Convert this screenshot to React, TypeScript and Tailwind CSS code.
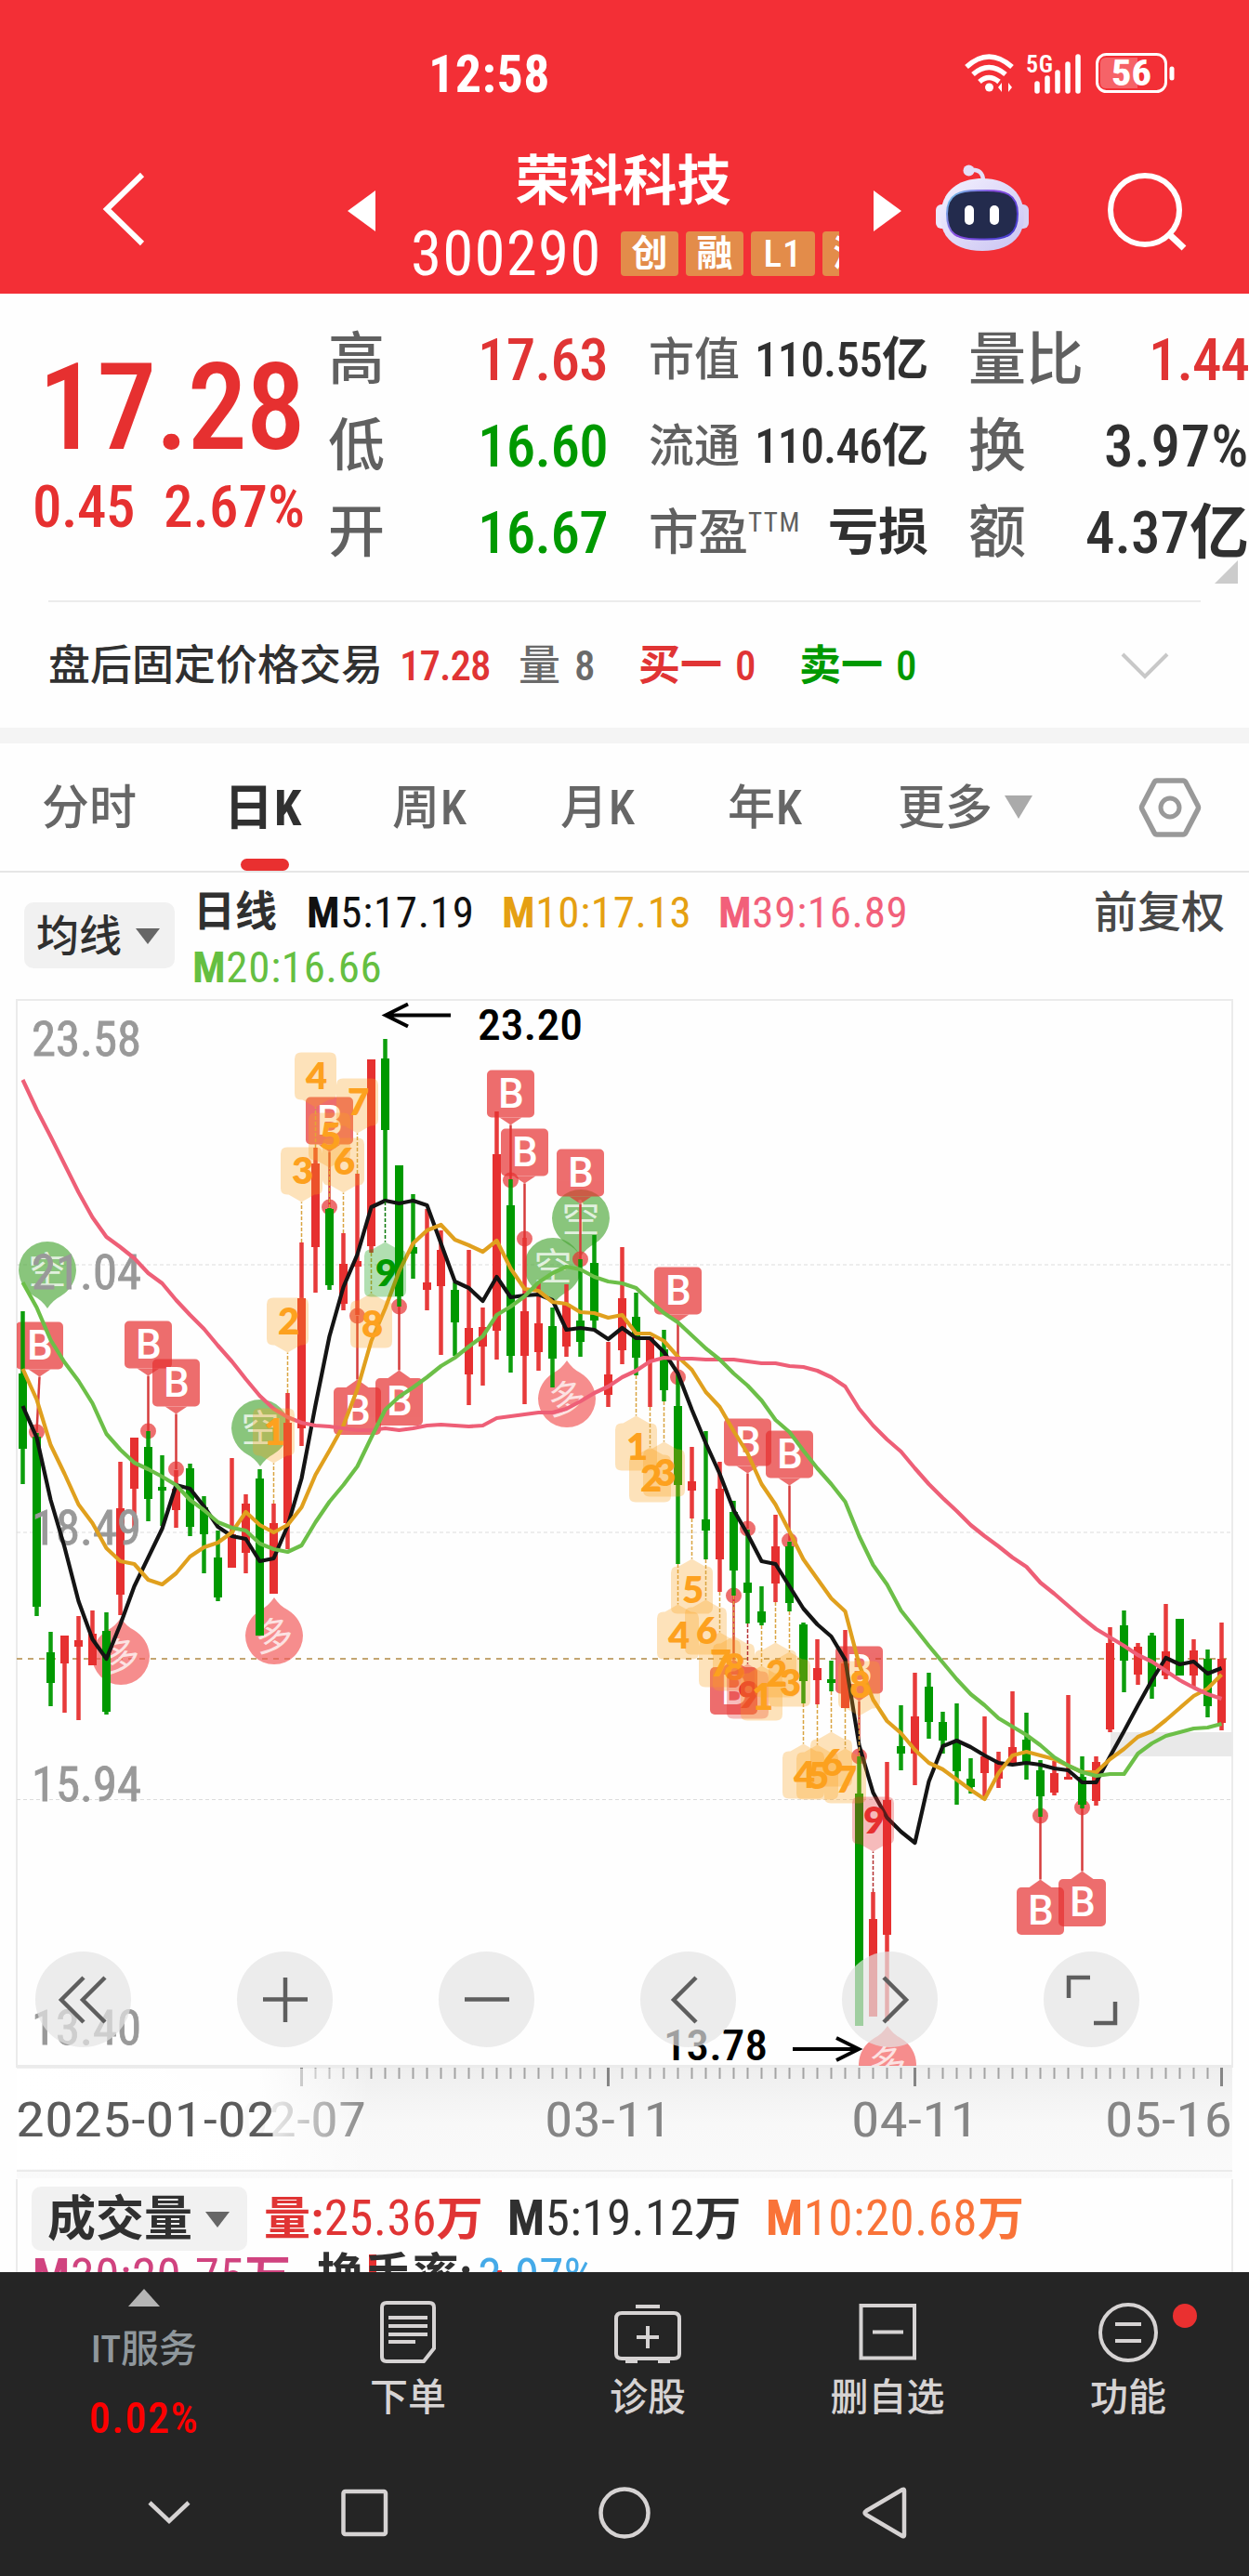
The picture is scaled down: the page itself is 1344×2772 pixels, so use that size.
import type { ReactNode } from "react";

const RED = "#e63030";
const GREEN = "#009900";

// [color, high, body top, body bottom, low], all in chart pixels
type Candle = ["r" | "g", number, number, number, number];

const candles: Candle[] = [
  ["g", 1411, 1478, 1559, 1597],
  ["g", 1542, 1546, 1729, 1739],
  ["g", 1756, 1778, 1811, 1836],
  ["r", 1760, 1760, 1790, 1843],
  ["r", 1739, 1765, 1772, 1851],
  ["r", 1733, 1758, 1792, 1792],
  ["g", 1735, 1755, 1842, 1845],
  ["r", 1573, 1623, 1716, 1738],
  ["r", 1547, 1547, 1602, 1644],
  ["g", 1540, 1557, 1613, 1637],
  ["g", 1566, 1600, 1604, 1642],
  ["r", 1582, 1602, 1625, 1644],
  ["g", 1575, 1580, 1643, 1653],
  ["g", 1610, 1622, 1651, 1693],
  ["g", 1647, 1676, 1719, 1723],
  ["r", 1569, 1651, 1687, 1687],
  ["r", 1608, 1618, 1671, 1693],
  ["g", 1581, 1591, 1760, 1760],
  ["r", 1618, 1639, 1715, 1715],
  ["r", 1499, 1531, 1639, 1667],
  ["r", 1337, 1397, 1537, 1556],
  ["r", 1235, 1252, 1342, 1391],
  ["g", 1300, 1301, 1383, 1388],
  ["r", 1327, 1360, 1403, 1410],
  ["r", 1263, 1357, 1363, 1415],
  ["r", 1140, 1140, 1341, 1348],
  ["g", 1118, 1139, 1216, 1293],
  ["g", 1254, 1254, 1395, 1406],
  ["g", 1285, 1342, 1349, 1376],
  ["r", 1301, 1380, 1388, 1410],
  ["r", 1324, 1345, 1384, 1458],
  ["g", 1380, 1388, 1423, 1459],
  ["r", 1345, 1429, 1479, 1512],
  ["r", 1407, 1428, 1449, 1491],
  ["r", 1196, 1242, 1432, 1463],
  ["g", 1269, 1297, 1459, 1477],
  ["r", 1332, 1411, 1459, 1511],
  ["r", 1381, 1424, 1455, 1475],
  ["g", 1407, 1427, 1462, 1493],
  ["r", 1382, 1403, 1449, 1460],
  ["g", 1355, 1421, 1444, 1460],
  ["g", 1329, 1359, 1421, 1430],
  ["r", 1444, 1479, 1501, 1514],
  ["r", 1342, 1397, 1453, 1468],
  ["g", 1391, 1417, 1461, 1480],
  ["r", 1439, 1439, 1466, 1514],
  ["g", 1431, 1452, 1496, 1508],
  ["g", 1479, 1513, 1598, 1683],
  ["r", 1557, 1594, 1604, 1634],
  ["g", 1540, 1635, 1647, 1678],
  ["r", 1573, 1602, 1678, 1713],
  ["g", 1615, 1627, 1690, 1717],
  ["g", 1646, 1703, 1714, 1747],
  ["g", 1707, 1734, 1746, 1749],
  ["r", 1630, 1664, 1704, 1724],
  ["g", 1659, 1664, 1725, 1734],
  ["g", 1746, 1748, 1809, 1833],
  ["r", 1764, 1795, 1808, 1834],
  ["g", 1787, 1807, 1811, 1820],
  ["r", 1754, 1790, 1838, 1838],
  ["g", 1890, 1930, 2180, 2180],
  ["r", 2036, 2065, 2170, 2170],
  ["r", 1896, 1937, 2082, 2175],
  ["g", 1835, 1879, 1887, 1905],
  ["r", 1800, 1847, 1887, 1921],
  ["g", 1800, 1815, 1853, 1871],
  ["g", 1842, 1853, 1873, 1887],
  ["g", 1833, 1873, 1906, 1942],
  ["g", 1892, 1914, 1923, 1930],
  ["r", 1847, 1890, 1908, 1935],
  ["r", 1885, 1897, 1914, 1924],
  ["r", 1820, 1880, 1899, 1899],
  ["g", 1843, 1872, 1897, 1915],
  ["g", 1894, 1905, 1933, 1955],
  ["r", 1895, 1908, 1929, 1932],
  ["r", 1824, 1912, 1915, 1915],
  ["g", 1890, 1912, 1942, 1946],
  ["r", 1890, 1896, 1938, 1943],
  ["r", 1751, 1768, 1861, 1864],
  ["g", 1733, 1749, 1787, 1821],
  ["r", 1768, 1772, 1802, 1813],
  ["g", 1757, 1760, 1815, 1828],
  ["r", 1726, 1777, 1803, 1807],
  ["g", 1742, 1742, 1803, 1803],
  ["r", 1764, 1776, 1803, 1817],
  ["g", 1775, 1785, 1836, 1848],
  ["r", 1746, 1785, 1854, 1862],
];

const ma5 = [
  1513, 1547, 1614, 1665, 1723, 1764, 1785, 1748, 1707, 1676, 1645, 1598, 1602, 1621, 1643, 1653, 1656, 1680, 1677,
  1642, 1591, 1512, 1438, 1385, 1350, 1299, 1292, 1295, 1292, 1297, 1338, 1379, 1386, 1400, 1374, 1396, 1394, 1393,
  1399, 1431, 1429, 1431, 1441, 1429, 1440, 1440, 1455, 1478, 1517, 1553, 1586, 1625, 1651, 1680, 1683, 1707, 1731,
  1748, 1761, 1786, 1878, 1929, 1956, 1971, 1983, 1917, 1879, 1873, 1880, 1889, 1897, 1899, 1897, 1899, 1903, 1905,
  1918, 1918, 1890, 1863, 1835, 1808, 1784, 1791, 1788, 1801, 1795,
];

const ma10 = [
  1473, 1506, 1555, 1586, 1619, 1639, 1666, 1680, 1683, 1700, 1705, 1693, 1675, 1665, 1660, 1649, 1627, 1641, 1649,
  1641, 1622, 1587, 1561, 1534, 1495, 1443, 1408, 1368, 1338, 1324, 1318, 1334, 1340, 1347, 1335, 1365, 1387, 1389,
  1401, 1403, 1412, 1413, 1418, 1415, 1435, 1435, 1443, 1460, 1474, 1498, 1514, 1540, 1564, 1597, 1619, 1648, 1678,
  1699, 1720, 1734, 1791, 1829, 1852, 1865, 1883, 1897, 1904, 1915, 1926, 1936, 1908, 1889, 1885, 1889, 1893, 1900,
  1907, 1907, 1893, 1882, 1869, 1863, 1851, 1838, 1825, 1817, 1802,
];

const ma20 = [
  1380, 1407, 1442, 1466, 1486, 1510, 1543, 1560, 1574, 1581, 1589, 1598, 1614, 1625, 1638, 1644, 1647, 1661, 1667,
  1670, 1663, 1638, 1616, 1598, 1578, 1547, 1517, 1503, 1493, 1482, 1470, 1461, 1449, 1438, 1415, 1406, 1395, 1380,
  1370, 1363, 1366, 1374, 1379, 1381, 1386, 1400, 1413, 1423, 1437, 1451, 1463, 1478, 1491, 1507, 1528, 1541, 1561,
  1580, 1597, 1616, 1653, 1684, 1705, 1733, 1752, 1771, 1789, 1807, 1823, 1835, 1849, 1858, 1867, 1878, 1891, 1900,
  1907, 1911, 1909, 1909, 1887, 1876, 1868, 1864, 1860, 1859, 1855,
];

const ma39 = [
  1162, 1194, 1223, 1253, 1283, 1310, 1331, 1342, 1354, 1370, 1381, 1399, 1415, 1430, 1448, 1465, 1484, 1502, 1516,
  1525, 1531, 1534, 1535, 1537, 1539, 1539, 1537, 1539, 1537, 1534, 1533, 1534, 1535, 1534, 1526, 1524, 1522, 1520,
  1520, 1516, 1508, 1499, 1492, 1482, 1475, 1465, 1461, 1462, 1462, 1463, 1463, 1463, 1465, 1467, 1467, 1470, 1471,
  1475, 1482, 1492, 1516, 1534, 1549, 1562, 1580, 1597, 1612, 1626, 1641, 1653, 1664, 1676, 1686, 1703, 1715, 1728,
  1741, 1753, 1762, 1771, 1781, 1788, 1798, 1808, 1816, 1823, 1828,
];

const xOf = (i: number) => 24.5 + i * 15;
const toPath = (line: number[]) => "M" + line.map((y, i) => `${xOf(i)} ${y}`).join("L");

// [candle index, dot y, pin sits below the candle]
const buys: [number, number, boolean][] = [
  [1, 1541, false],
  [9, 1540, false],
  [11, 1581, false],
  [22, 1299, false],
  [24, 1416, true],
  [27, 1406, true],
  [35, 1270, false],
  [36, 1333, false],
  [40, 1355, false],
  [47, 1482, false],
  [51, 1717, true],
  [52, 1645, false],
  [55, 1658, false],
  [60, 1890, false],
  [73, 1954, true],
  [76, 1945, true],
];

// [candle index, digit, sits below the candle, color]
const counts: [number, string, boolean, "o" | "g" | "r"][] = [
  [18, "1", false, "o"],
  [19, "2", false, "o"],
  [20, "3", false, "o"],
  [21, "4", false, "o"],
  [22, "5", false, "o"],
  [23, "6", false, "o"],
  [24, "7", false, "o"],
  [25, "8", true, "o"],
  [26, "9", true, "g"],
  [44, "1", true, "o"],
  [45, "2", true, "o"],
  [46, "3", true, "o"],
  [47, "4", true, "o"],
  [48, "5", true, "o"],
  [49, "6", true, "o"],
  [50, "7", true, "o"],
  [51, "8", true, "o"],
  [52, "9", true, "r"],
  [53, "1", true, "o"],
  [54, "2", true, "o"],
  [55, "3", true, "o"],
  [56, "4", true, "o"],
  [57, "5", true, "o"],
  [58, "6", true, "o"],
  [59, "7", true, "o"],
  [60, "8", false, "o"],
  [61, "9", false, "r"],
];

const countColor = {
  o: { fill: "#fda11f", line: "#d9a441", opacity: 0.3 },
  g: { fill: "#009900", line: "#0a7a0a", opacity: 0.3 },
  r: { fill: "#e63030", line: "#b53030", opacity: 0.32 },
};

// [center x, center y, bullish]
const bubbles: [number, number, boolean][] = [
  [51, 1367, false],
  [280, 1537, false],
  [595, 1363, false],
  [625, 1311, false],
  [130, 1782, true],
  [295, 1760, true],
  [610, 1505, true],
  [955, 2221, true],
];

function Bubble({ x, y, bull }: { x: number; y: number; bull: boolean }) {
  const d = bull ? -1 : 1;
  return (
    <g>
      <path
        d={`M${x - 31} ${y}A31 31 0 1 ${bull ? 0 : 1} ${x + 31} ${y}Q${x + 30} ${y + d * 18} ${x + 14} ${y + d * 28}Q${x + 6} ${y + d * 32} ${x} ${y + d * 41}Q${x - 6} ${y + d * 32} ${x - 14} ${y + d * 28}Q${x - 30} ${y + d * 18} ${x - 31} ${y}Z`}
        fill={bull ? "#f25c5c" : "#4aa636"}
        opacity={bull ? 0.7 : 0.65}
      />
      <text
        x={x}
        y={y + 15}
        fontSize={41}
        textAnchor="middle"
        fill="#fff"
        opacity={0.75}
        transform={`rotate(${bull ? -8 : 0} ${x} ${y})`}
      >
        {bull ? "多" : "空"}
      </text>
    </g>
  );
}

function BuyPin({ i, dot, below }: { i: number; dot: number; below: boolean }) {
  const cx = xOf(i);
  const x = i === 1 ? 42.5 : cx;
  const top = below ? dot + 77 : dot - 118.5;
  const tip = below ? dot + 68.5 : dot - 59.5;
  const base = below ? top : top + 51;
  return (
    <g>
      <line x1={x} y1={tip} x2={cx} y2={dot} stroke="#d63c3c" strokeWidth={2.5} />
      <circle cx={cx} cy={dot} r={8.5} fill={RED} opacity={0.7} />
      <g fill={RED} opacity={0.7}>
        <rect x={x - 25.5} y={top} width={51} height={51} rx={5} />
        <path d={`M${x - 12} ${base}L${x} ${tip}L${x + 12} ${base}Z`} />
      </g>
      <text
        x={x + 0.5}
        y={top + 40}
        fontSize={44}
        fontWeight={500}
        textAnchor="middle"
        fill="#fff"
        className="font-stretch-normal"
      >
        B
      </text>
    </g>
  );
}

function CountPin({ i, digit, below, color }: { i: number; digit: string; below: boolean; color: "o" | "g" | "r" }) {
  const x = xOf(i);
  const c = countColor[color];
  const edge = below ? candles[i][4] : candles[i][1];
  const top = below ? edge + 51.5 : edge - 102.5;
  const tip = below ? edge + 43.5 : edge - 43.5;
  const base = below ? top : top + 51;
  return (
    <g>
      <line x1={x} y1={edge} x2={x} y2={tip} stroke={c.line} strokeWidth={1.5} strokeDasharray="4 2" />
      <path
        d={`M${x - 15.5} ${top}H${x + 15.5}q7 0 7 7v37q0 7 -7 7H${x - 15.5}q-7 0 -7 -7v-37q0 -7 7 -7Z M${x - 14} ${base}L${x} ${tip}L${x + 14} ${base}Z`}
        fill={c.fill}
        opacity={c.opacity}
      />
      <text
        x={x + 1}
        y={top + 39}
        fontSize={40}
        fontWeight={800}
        textAnchor="middle"
        fill={c.fill}
        className="font-['Lato',sans-serif]"
      >
        {digit}
      </text>
    </g>
  );
}

const priceLabels: [string, number][] = [
  ["23.58", 1136],
  ["21.04", 1387],
  ["18.49", 1662],
  ["15.94", 1938],
  ["13.40", 2200],
];

const dateLabels: [string, number][] = [
  ["03-11", 586],
  ["04-11", 916],
  ["05-16", 1189],
];

function KLineChart() {
  return (
    <svg width="1344" height="1270" viewBox="0 1075 1344 1270" className="block">
      <defs>
        <linearGradient id="axis" x1="0" y1="0" x2="0" y2="1">
          <stop offset="0" stopColor="#eeeeee" />
          <stop offset="0.5" stopColor="#f8f8f8" />
          <stop offset="1" stopColor="#fafafa" />
        </linearGradient>
        <linearGradient id="fade" x1="0" y1="0" x2="1" y2="0">
          <stop offset="0" stopColor="#fff" />
          <stop offset="0.68" stopColor="#fff" stopOpacity="0.95" />
          <stop offset="1" stopColor="#fff" stopOpacity="0" />
        </linearGradient>
        <clipPath id="plot">
          <rect x="18" y="1075" width="1308" height="1148" />
        </clipPath>
      </defs>

      <rect x="18" y="2225" width="1308" height="119" fill="url(#axis)" />
      <g stroke="#ebebeb" strokeWidth="2">
        <path d="M18 1075V2223M1326 1075V2223" />
        <path d="M17 1075.5H1327M17 2223.5H1327" strokeWidth="3" />
        <path d="M18 2336H1326" strokeWidth="2" />
      </g>
      <path d="M18 1361H1326M18 1649H1326M18 1936.5H1326" stroke="#dcdcdc" strokeWidth="1" strokeDasharray="4 3" />
      <path d="M18 1785H1326" stroke="#c3a571" strokeWidth="2" strokeDasharray="6 6" />
      <rect x="1195" y="1864" width="131" height="26" fill="#e9e9e9" />

      <g clipPath="url(#plot)">
        {bubbles.map(([x, y, bull]) => (
          <Bubble key={x} x={x} y={y} bull={bull} />
        ))}
        {buys.map(([i, dot, below]) => (
          <BuyPin key={i} i={i} dot={dot} below={below} />
        ))}
        {candles.map(([color, high, top, bottom, low], i) => (
          <g key={i} fill={color === "r" ? RED : GREEN}>
            <rect x={xOf(i) - 2.25} y={high} width={4.5} height={low - high} opacity={0.95} />
            <rect x={xOf(i) - 4.5} y={top} width={9} height={bottom - top} />
          </g>
        ))}
        <g fontSize="52" fill="#999" strokeWidth="0.8" stroke="#999">
          {priceLabels.map(([label, y]) => (
            <text key={label} x="34" y={y} textLength="118" lengthAdjust="spacingAndGlyphs">
              {label}
            </text>
          ))}
        </g>
        <g fill="none" strokeWidth="4.2" strokeLinejoin="round">
          <path d={toPath(ma5)} stroke="#141414" />
          <path d={toPath(ma10)} stroke="#e0a01e" />
          <path d={toPath(ma39)} stroke="#ee5f77" />
          <path d={toPath(ma20)} stroke="#6cbf48" />
        </g>
        {counts.map(([i, digit, below, color]) => (
          <CountPin key={i} i={i} digit={digit} below={below} color={color} />
        ))}
        <g fontSize="46" fontWeight="500">
          <text x="514" y="1119" textLength="113" lengthAdjust="spacingAndGlyphs">
            23.20
          </text>
          <text x="714" y="2217" textLength="112" lengthAdjust="spacingAndGlyphs">
            13.78
          </text>
        </g>
        <g fill="none" stroke="#000" strokeWidth="4">
          <path d="M485 1092.5H415M439 1080.500L415 1092.500L439 1104.500" />
          <path d="M853 2205H924M900 2193L924 2205L900 2217" />
        </g>
      </g>

      <g stroke="#a3a3a3" strokeWidth="2">
        {candles.map((_, i) => i > 19 && <line key={i} x1={xOf(i)} x2={xOf(i)} y1="2225" y2="2237" />)}
      </g>
      <path d="M324.500 2225V2245M654.500 2225V2245M984.500 2225V2245M1314.500 2225V2245" stroke="#858585" strokeWidth="3" />
      <g fontSize="51" fill="#858585">
        <text x="259" y="2299" textLength="135" lengthAdjust="spacingAndGlyphs">
          02-07
        </text>
        {dateLabels.map(([label, x]) => (
          <text key={label} x={x} y="2299" textLength="137" lengthAdjust="spacingAndGlyphs">
            {label}
          </text>
        ))}
      </g>
      <rect x="18" y="2226" width="380" height="108" fill="url(#fade)" />
      <text x="17" y="2299" fontSize="51" fill="#5c5c5c" textLength="279" lengthAdjust="spacingAndGlyphs">
        2025-01-02
      </text>
    </svg>
  );
}

function RoundButton({ children }: { children: ReactNode }) {
  return (
    <button className="size-[103px] rounded-full bg-[#e4e4e4]/70">
      <svg
        width="103"
        height="103"
        viewBox="0 0 103 103"
        fill="none"
        stroke="#5e5e5e"
        strokeWidth="4.500"
      >
        {children}
      </svg>
    </button>
  );
}

function ChartButtons() {
  return (
    <div className="absolute left-[38px] top-[1025px] flex gap-[114px]">
      <RoundButton>
        <path d="M52 28L28 52L52 76M75 28L51 52L75 76" />
      </RoundButton>
      <RoundButton>
        <path d="M28 51.500H76M52 28V76" />
      </RoundButton>
      <RoundButton>
        <path d="M28 51.500H76" />
      </RoundButton>
      <RoundButton>
        <path d="M60 28L36 52L60 76" />
      </RoundButton>
      <RoundButton>
        <path d="M45 28L69 52L45 76" />
      </RoundButton>
      <RoundButton>
        <path d="M27 50V28H50M77 54V77H54" />
      </RoundButton>
    </div>
  );
}

function StatusIcons() {
  return (
    <svg width="230" height="46" viewBox="1036 56 230 46" className="ml-[446px]">
      <g fill="none" stroke="#fff" strokeWidth="5.500">
        <path d="M1040 72Q1064 50 1089 72" />
        <path d="M1047 80Q1064 65 1082 80" />
        <path d="M1054 88Q1064 79 1075 88" />
      </g>
      <circle cx="1064.500" cy="94" r="4.500" fill="#fff" />
      <path d="M1074 94l4-5v10zM1089 94l-4-5v10z" fill="#fff" />
      <text x="1104" y="78" fontSize="26" fontWeight="600" fill="#fff" textLength="29">
        5G
      </text>
      <path d="M1116 98V90M1127 98V84M1138 98V78M1149 98V69M1160 98V61" stroke="#fff" strokeWidth="5.500" strokeLinecap="round" />
      <rect x="1180.500" y="58.500" width="74" height="40" rx="10" fill="none" stroke="#fff" strokeWidth="3" />
      <path d="M1190 62H1224V95H1190Q1184 95 1184 89V68Q1184 62 1190 62Z" fill="#fff" opacity="0.25" />
      <text x="1196" y="92" fontSize="39" fontWeight="800" fill="#fff" textLength="43" lengthAdjust="spacingAndGlyphs">
        56
      </text>
      <path d="M1261 74V84" stroke="#fff" strokeWidth="5" strokeLinecap="round" />
    </svg>
  );
}

function Robot() {
  return (
    <svg width="102" height="96" viewBox="0 0 102 96">
      <defs>
        <linearGradient id="shell" x1="0" y1="0" x2="1" y2="1">
          <stop offset="0" stopColor="#f4f1ff" />
          <stop offset="1" stopColor="#c9c3f2" />
        </linearGradient>
        <linearGradient id="rim" x1="0" y1="0" x2="1" y2="0.6">
          <stop offset="0" stopColor="#6fd0e8" />
          <stop offset="0.5" stopColor="#8a4be0" />
          <stop offset="1" stopColor="#4a3fd0" />
        </linearGradient>
      </defs>
      <path d="M37 6Q52 4 52 18" fill="none" stroke="#e4def8" strokeWidth="4.500" />
      <circle cx="36.500" cy="6.500" r="6" fill="#e4def8" />
      <rect x="1" y="43" width="14" height="26" rx="6" fill="#ece7fb" />
      <rect x="87" y="43" width="14" height="26" rx="6" fill="#d8d2f3" />
      <path d="M51 15C80 15 96 32 96 56C96 80 78 93 51 93C24 93 6 80 6 56C6 32 22 15 51 15Z" fill="url(#shell)" />
      <path d="M51 28C76 27 89 32 89 53C89 75 80 81 51 80.500C22 81 13 75 13 53C13 32 26 27 51 28Z" fill="#232b4d" stroke="url(#rim)" strokeWidth="2" />
      <rect x="32" y="44" width="10" height="21" rx="5" fill="#fff" />
      <rect x="59" y="44" width="10" height="21" rx="5" fill="#fff" />
    </svg>
  );
}

function Header() {
  return (
    <header className="h-[316px] bg-[#f32f36] text-white">
      <div className="flex h-[158px] items-center pl-[461px]">
        <span className="w-[129px] whitespace-nowrap pt-[2px] text-[56px] font-bold leading-none tracking-[0.5px]">12:58</span>
        <StatusIcons />
      </div>
      <div className="flex h-[158px] items-start">
        <svg width="50" height="80" viewBox="0 0 50 80" className="ml-[107px] mt-[27px]">
          <path d="M46 3L8 40L46 77" fill="none" stroke="#fff" strokeWidth="6" />
        </svg>
        <svg width="30" height="44" viewBox="0 0 30 44" className="ml-[217px] mt-[47px]">
          <path d="M30 0V44L0 22Z" fill="#fff" />
        </svg>
        <div className="ml-[38px] w-[461px] overflow-hidden">
          <h1 className="mt-1 pr-[4px] text-center text-[58px] font-bold leading-[66px]">荣科科技</h1>
          <div className="mt-[20px] flex items-center whitespace-nowrap text-[39px] font-bold">
            <span className="w-[226px] shrink-0 text-[67px] font-normal leading-[50px] tracking-[1.2px]">300290</span>
            <div className="flex gap-2 leading-[48px]">
              <span className="w-[62px] shrink-0 rounded-[4px] bg-[#e38c4a] text-center">创</span>
              <span className="w-[62px] shrink-0 rounded-[4px] bg-[#e38c4a] text-center">融</span>
              <span className="w-[69px] shrink-0 rounded-[4px] bg-[#e38c4a] text-center text-[41px] font-medium tracking-[1px]">L1</span>
              <span className="w-[62px] shrink-0 rounded-[4px] bg-[#e38c4a] text-center">深</span>
            </div>
          </div>
        </div>
        <svg width="30" height="44" viewBox="0 0 30 44" className="ml-[37px] mt-[47px]">
          <path d="M0 0V44L30 22Z" fill="#fff" />
        </svg>
        <div className="ml-[36px] mt-[19px]">
          <Robot />
        </div>
        <svg width="86" height="86" viewBox="0 0 86 86" className="ml-[84px] mt-[26px]">
          <g fill="none" stroke="#fff" strokeWidth="6">
            <circle cx="40" cy="42" r="37" />
            <path d="M66 68L82 83" strokeWidth="7" />
          </g>
        </svg>
      </div>
    </header>
  );
}

const highLow = [
  ["高", "17.63", "text-[#e03434]"],
  ["低", "16.60", "text-[#009900]"],
  ["开", "16.67", "text-[#009900]"],
];

function Quote() {
  return (
    <section className="relative flex h-[330px] pt-[25px] font-medium">
      <div className="w-[353px] text-[#e63030]">
        <div className="mt-[34px] pl-[41px] text-[129px] leading-[128px] tracking-[-1.5px]">17.28</div>
        <div className="mt-[6px] flex whitespace-nowrap pl-[35px] text-[63px] leading-[74px] tracking-[-0.5px]">
          <span className="w-[141px]">0.45</span>
          <span className="tracking-normal">2.67%</span>
        </div>
      </div>
      <div className="w-[301px] leading-[93px]">
        {highLow.map(([label, value, color]) => (
          <div key={label} className="flex justify-between">
            <span className="text-[61px] text-[#606060]">{label}</span>
            <span className={`text-[63px] tracking-[-0.7px] ${color}`}>{value}</span>
          </div>
        ))}
      </div>
      <div className="ml-[44px] w-[301px] leading-[93px] text-[#303030]">
        <div className="flex items-center">
          <span className="w-[114px] text-[49px] text-[#606060]">市值</span>
          <span className="flex-1 text-[51px] tracking-[-0.8px]">110.55</span>
          <span className="text-[50px] font-bold">亿</span>
        </div>
        <div className="flex items-center">
          <span className="w-[114px] text-[49px] text-[#606060]">流通</span>
          <span className="flex-1 text-[51px] tracking-[-0.8px]">110.46</span>
          <span className="text-[50px] font-bold">亿</span>
        </div>
        <div className="flex items-center">
          <span className="text-[53.5px] text-[#606060]">市盈</span>
          <span className="flex-1 pb-[22px] text-[29px] leading-none font-normal tracking-[1.5px] text-[#606060]">TTM</span>
          <span className="text-[54px] font-bold">亏损</span>
        </div>
      </div>
      <div className="ml-[43px] w-[302px] leading-[93px] text-[#303030]">
        <div className="flex justify-between">
          <span className="text-[62px] text-[#606060]">量比</span>
          <span className="text-[63px] tracking-[-1px] text-[#e03434]">1.44</span>
        </div>
        <div className="flex justify-between">
          <span className="text-[62px] text-[#606060]">换</span>
          <span className="text-[63px] tracking-[0.8px]">3.97%</span>
        </div>
        <div className="flex">
          <span className="flex-1 text-[62px] text-[#606060]">额</span>
          <span className="text-[63px]">4.37</span>
          <span className="text-[64px] font-bold">亿</span>
        </div>
      </div>
      <svg width="25" height="25" viewBox="0 0 25 25" className="absolute left-[1307px] top-[287px]">
        <path d="M25 0V25H0Z" fill="#ccc" />
      </svg>
    </section>
  );
}

function AfterHours() {
  return (
    <section className="mx-[52px] flex h-[137px] items-center border-t-2 border-[#ececec] pt-[3px] whitespace-nowrap text-[45px] font-medium">
      <span className="w-[378px] text-[#303030]">盘后固定价格交易</span>
      <span className="w-[128px] text-[45px] tracking-[-1px] text-[#e03434]">17.28</span>
      <span className="w-[60px] text-[#6a6a6a]">量</span>
      <span className="w-[69px] text-[45px] text-[#6a6a6a]">8</span>
      <span className="w-[104px] font-bold text-[#e03434]">买一</span>
      <span className="w-[69px] text-[45px] text-[#e03434]">0</span>
      <span className="w-[104px] font-bold text-[#009900]">卖一</span>
      <span className="w-[242px] text-[45px] text-[#009900]">0</span>
      <svg width="52" height="32" viewBox="0 0 52 32">
        <path d="M2 3L26 27L50 3" fill="none" stroke="#c8c8c8" strokeWidth="4" />
      </svg>
    </section>
  );
}

function Tabs() {
  return (
    <nav className="flex h-[139px] items-center border-b-2 border-[#e6e6e6] pl-[45px] text-[51px] font-medium text-[#666]">
      <span className="w-[196px] pt-[3px]">分时</span>
      <span className="flex h-full w-[181px] flex-col">
        <span className="flex h-[125px] items-center pt-[17px] text-[53px] font-bold tracking-[1px] text-[#303030]">日K</span>
        <span className="ml-[18px] h-[13px] w-[52px] rounded-full bg-[#e93030]" />
      </span>
      <span className="w-[181px] pt-[3px] tracking-[1px]">周K</span>
      <span className="w-[180px] pt-[3px] tracking-[1px]">月K</span>
      <span className="w-[183px] pt-[3px] tracking-[1px]">年K</span>
      <span className="w-[115px] pt-[3px]">更多</span>
      <svg width="30" height="25" viewBox="0 0 30 25">
        <path d="M0 0H30L15 25Z" fill="#aaa" />
      </svg>
      <svg width="68" height="68" viewBox="0 0 68 68" className="ml-[114px]" fill="none" stroke="#999">
        <path d="M20 5H48Q50 5 51 7L64 32Q65 34 64 36L51 61Q50 63 48 63H20Q18 63 17 61L4 36Q3 34 4 32L17 7Q18 5 20 5Z" strokeWidth="5.500" />
        <circle cx="34" cy="34" r="10" strokeWidth="5" />
      </svg>
    </nav>
  );
}

function Caret() {
  return (
    <svg width="26" height="17" viewBox="0 0 26 17">
      <path d="M0 0H26L13 17Z" fill="#666" />
    </svg>
  );
}

function AverageLegend() {
  return (
    <section className="flex h-[136px] items-start whitespace-nowrap text-[47px]">
      <button className="ml-[26px] mt-[32px] flex h-[71px] w-[162px] items-center justify-between rounded-[10px] bg-[#f1f1f1] pr-[16px] pl-[13px] pt-[2px] text-[46px] font-medium text-[#303030]">
        均线
        <Caret />
      </button>
      <div className="ml-[19px] w-[970px] pt-[13px] leading-[59px] tracking-[0.7px]">
        <div className="flex">
          <span className="w-[123px] pl-[1px] text-[45px] font-bold tracking-normal text-[#303030]">日线</span>
          <span className="w-[210px] text-[#111]"><b>M</b>5:17.19</span>
          <span className="w-[233px] text-[#e5a012]"><b>M</b>10:17.13</span>
          <span className="text-[#f2607a]"><b>M</b>39:16.89</span>
        </div>
        <div className="text-[#65bf41]"><b>M</b>20:16.66</div>
      </div>
      <span className="pt-[13px] text-[47px] leading-[59px] font-medium text-[#484848]">前复权</span>
    </section>
  );
}

function VolumePanel() {
  return (
    <section className="relative mx-[17px] h-[100px] overflow-hidden border-x-2 border-[#ebebeb] whitespace-nowrap">
      <svg width="200" height="20" viewBox="0 0 200 20" className="absolute left-[376px] top-[80px]">
        <path d="M2 1H10V20H2ZM137 18H145V20H137Z" fill={RED} />
      </svg>
      <div className="flex h-[85px] items-center pl-[15px] text-[53px] tracking-[0.5px]">
        <button className="flex h-[69px] w-[232px] items-center justify-between rounded-[10px] bg-[#f1f1f1] pt-[2px] pr-[19px] pl-[17px] text-[52px] font-bold tracking-normal text-[#303030]">
          成交量
          <Caret />
        </button>
        <span className="ml-[18px] w-[262px] text-[#e03434]"><b className="text-[50px]">量:</b>25.36<b className="text-[50px]">万</b></span>
        <span className="w-[278px] text-[#303030]"><b>M</b>5:19.12<b className="text-[50px]">万</b></span>
        <span className="text-[#f97338]"><b>M</b>10:20.68<b className="text-[50px]">万</b></span>
      </div>
      <div className="relative flex h-[40px] items-center pl-[16px] text-[53px] leading-[40px]">
        <span className="w-[306px] tracking-[0.5px] text-[#d0437f]"><b>M</b>30:20.75<b className="text-[50px]">万</b></span>
        <span className="w-[173px] text-[51px] font-bold text-[#303030]">换手率:</span>
        <span className="text-[#45aae8]">3.97%</span>
      </div>
    </section>
  );
}

function ToolItem({ label, children }: { label: string; children: ReactNode }) {
  return (
    <div className="flex flex-col items-center pt-[26px] text-[41px] font-medium text-[#d6d3d3]">
      <svg width="76" height="76" viewBox="0 0 76 76" fill="none" stroke="#d6d3d3" strokeWidth="4">
        {children}
      </svg>
      <span className="pt-[2px] leading-[62px]">{label}</span>
    </div>
  );
}

function BottomBar() {
  return (
    <footer className="h-[327px] bg-[#252525]">
      <div className="relative grid h-[195px] grid-cols-[310px_258px_258px_258px_260px]">
        <div className="flex flex-col items-center pt-[18px] text-[41px] font-medium">
          <svg width="34" height="19" viewBox="0 0 34 19">
            <path d="M17 0L34 19H0Z" fill="#b5b5b5" />
          </svg>
          <span className="mt-[15px] leading-[62px] text-[#8f979c]">IT服务</span>
          <span className="mt-[12px] text-[46px] leading-[62px] tracking-[1.5px] text-[#fe0000]">0.02%</span>
        </div>
        <ToolItem label="下单">
          <path d="M15 7H61Q66 7 66 12V56L55 70H15Q10 70 10 65V12Q10 7 15 7Z" />
          <path d="M17 23H59M17 32H59M17 41H59M17 49H46" />
        </ToolItem>
        <ToolItem label="诊股">
          <path d="M25 11H51M10 18H66Q72 18 72 24V62Q72 67 66 67H10Q4 67 4 62V24Q4 18 10 18ZM38 32V56M26 44H50" />
          <path d="M14 70H27M49 70H62" />
        </ToolItem>
        <ToolItem label="删自选">
          <path d="M9.500 10H67V66.500H9.500ZM22 38.500H55" />
        </ToolItem>
        <ToolItem label="功能">
          <circle cx="38" cy="39" r="30" />
          <path d="M24 30H52M24 48H52" />
        </ToolItem>
        <span className="absolute left-[1262px] top-[34px] size-[26px] rounded-full bg-[#ea3030]" />
      </div>
      <svg width="1344" height="132" viewBox="0 2640 1344 132" fill="none" stroke="#d6d3d3" strokeWidth="4.500">
        <path d="M161 2693L182 2713L203 2693" />
        <rect x="369.500" y="2681" width="45.500" height="46" rx="2" />
        <circle cx="672" cy="2704" r="25.500" />
        <path d="M973 2680V2728Q973 2730 971 2729L932 2706Q929 2704 932 2702L971 2679Q973 2678 973 2680Z" />
      </svg>
    </footer>
  );
}

export default function App() {
  return (
    <div className="w-[1344px] overflow-hidden bg-[#fefefe] font-['Roboto','Noto_Sans_CJK_SC',sans-serif] font-stretch-semi-condensed">
      <Header />
      <Quote />
      <AfterHours />
      <div className="h-[17px] bg-[#f4f4f4]" />
      <Tabs />
      <AverageLegend />
      <div className="relative">
        <KLineChart />
        <ChartButtons />
      </div>
      <VolumePanel />
      <BottomBar />
    </div>
  );
}
